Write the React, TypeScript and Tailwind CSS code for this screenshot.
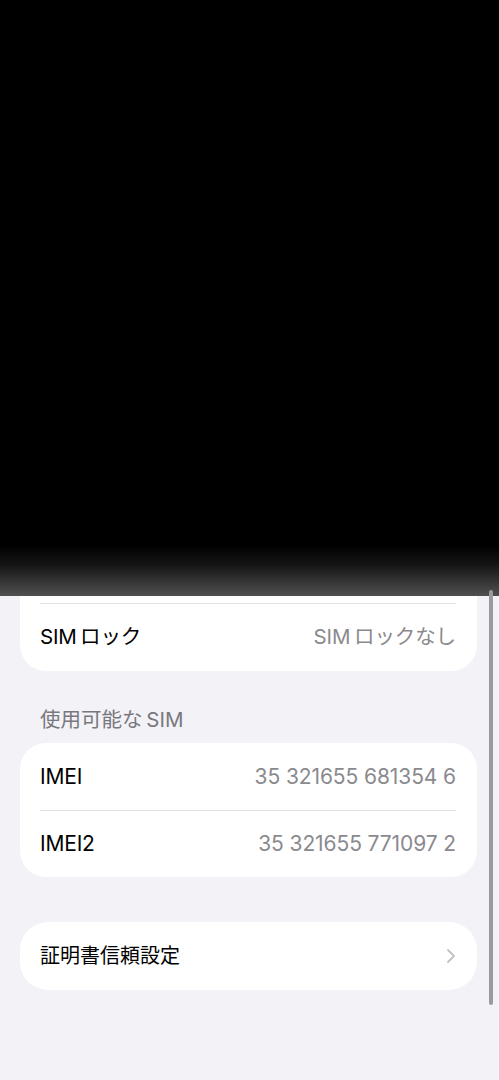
import React from "react";

const font = { fontFamily: '"Inter", "Noto Sans CJK JP", sans-serif' };

function Row({ label, value, size = "text-[21px]" }: { label: string; value?: string; size?: string }) {
  return (
    <div className="flex items-center justify-between h-[67px] pl-[20px] pr-[21px]">
      <span className={`${size} text-black tracking-[-0.2px]`}>{label}</span>
      {value && <span className={`${size} text-[#8a8a8e] tracking-[-0.1px]`}>{value}</span>}
    </div>
  );
}

function Divider() {
  return <div className="ml-[20px] mr-[21px] h-px bg-[#e2e2e6]" />;
}

export default function App() {
  return (
    <div className="relative w-[499px] h-[1080px] bg-[#f2f2f7] overflow-hidden" style={font}>
      <div className="h-[596px] bg-[linear-gradient(to_bottom,#000_0px,#000_545px,#151515_565px,#505050_596px)]" />
      <div className="ml-[20px] mr-[22px] bg-white rounded-b-[26px]">
        <div className="h-[7px]" />
        <Divider />
        <Row label={"SIM\u2009ロック"} value={"SIM\u2009ロックなし"} size="text-[20.5px]" />
      </div>
      <div className="mt-[37px] mb-[11px] pl-[40px] h-[24px] leading-[24px] text-[20.5px] text-[#78787d]">
        {"使用可能な\u2009SIM"}
      </div>
      <div className="ml-[20px] mr-[22px] bg-white rounded-[26px]">
        <Row label="IMEI" value="35 321655 681354 6" />
        <Divider />
        <div className="-mt-px" />
        <Row label="IMEI2" value="35 321655 771097 2" />
      </div>
      <div className="mt-[45px] ml-[20px] mr-[22px] bg-white rounded-[28px]">
        <div className="h-[68px] flex items-center justify-between pl-[20px] pr-[21px]">
          <span className="text-[20px] text-black">証明書信頼設定</span>
          <svg width="10" height="16" viewBox="0 0 10 16">
            <path d="M2 2 L8 8 L2 14" fill="none" stroke="#c4c4c7" strokeWidth="2" strokeLinecap="round" strokeLinejoin="round" />
          </svg>
        </div>
      </div>
      <div className="absolute left-[489px] top-[590px] w-[4px] h-[415px] rounded-full bg-[#9b9b9f]" />
    </div>
  );
}
